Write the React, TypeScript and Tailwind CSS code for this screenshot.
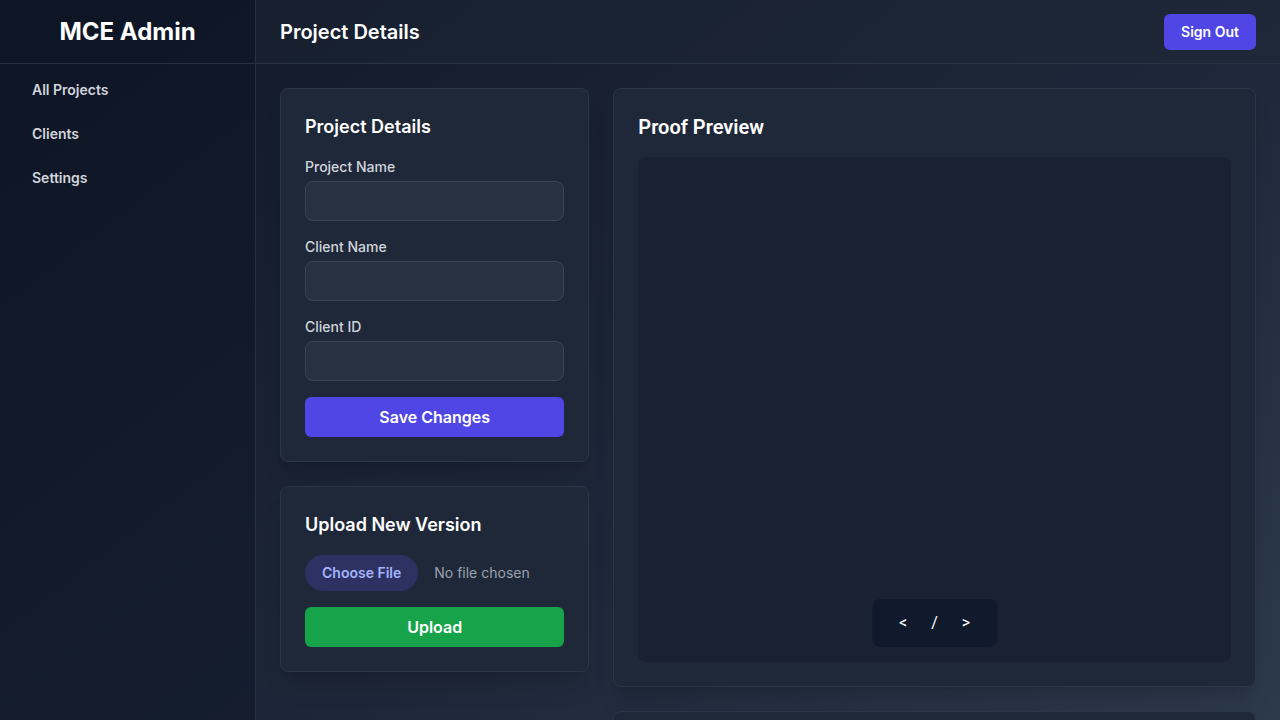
import { useState } from "react";

const navItems = ["All Projects", "Clients", "Settings"];

function Field({ label }: { label: string }) {
  return (
    <div>
      <label className="block text-sm font-medium text-gray-300">{label}</label>
      <input
        type="text"
        className="mt-1 block w-full h-10 rounded-lg border border-[#3a4457] bg-[#283142] px-3 text-sm text-white outline-none"
      />
    </div>
  );
}

export default function App() {
  const [page] = useState<{ current?: number; total?: number }>({});

  return (
    <div
      className="flex min-h-screen bg-gradient-to-br from-[#111827] via-[#1e2739] to-[#334155] text-white"
      style={{ fontFamily: "Inter, 'Noto Sans', sans-serif" }}
    >
      {/* Sidebar */}
      <aside className="w-64 shrink-0 border-r border-[#273043] bg-[#0b1222]/40">
        <div className="flex h-16 items-center justify-center border-b border-[#273043]">
          <h1 className="text-2xl font-bold">MCE Admin</h1>
        </div>
        <nav className="space-y-1 px-4 pt-1.5">
          {navItems.map((item) => (
            <a key={item} href="#" className="block rounded-lg px-4 py-2.5 text-sm font-semibold text-gray-300">
              {item}
            </a>
          ))}
        </nav>
      </aside>

      {/* Main */}
      <div className="flex-1 min-w-0">
        <header className="flex h-16 items-center justify-between border-b border-[#2a3447] bg-[#1f2737]/40 px-6">
          <h2 className="text-xl font-semibold">Project Details</h2>
          <button className="rounded-md bg-[#4f46e5] px-[17px] py-2 text-sm font-semibold">Sign Out</button>
        </header>

        <main className="grid grid-cols-3 gap-6 p-6">
          <div className="col-span-1 space-y-6">
            <section className="rounded-lg border border-[#2c3649] bg-[#1f2839] p-6 shadow-xl">
              <h3 className="mb-4 text-lg font-semibold">Project Details</h3>
              <div className="space-y-4">
                <Field label="Project Name" />
                <Field label="Client Name" />
                <Field label="Client ID" />
                <button className="h-10 w-full rounded-md bg-[#4f46e5] text-base font-semibold">Save Changes</button>
              </div>
            </section>

            <section className="rounded-lg border border-[#2c3649] bg-[#1f2839] p-6 shadow-xl">
              <h3 className="mb-4 text-lg font-semibold">Upload New Version</h3>
              <div className="space-y-4">
                <input
                  type="file"
                  className="block h-9 w-full text-sm text-gray-400 file:mr-4 file:h-9 file:rounded-full file:border-0 file:bg-[#2d3263] file:px-[17px] file:text-sm file:font-semibold file:text-[#a5b4fc]"
                />
                <button className="h-10 w-full rounded-md bg-[#16a34a] text-base font-semibold">Upload</button>
              </div>
            </section>
          </div>

          <div className="col-span-2 space-y-6">
            <section className="rounded-lg border border-[#2c3649] bg-[#1f2839] p-6 shadow-xl">
              <h3 className="mb-4 text-xl font-semibold leading-7" style={{ fontFamily: "Roboto, sans-serif" }}>
                Proof Preview
              </h3>
              <div className="relative h-[505px] rounded-lg bg-[#1a2130]">
                <div
                  className="absolute bottom-[15px] left-1/2 flex -translate-x-1/2 items-center gap-6 rounded-lg bg-[#111a2c] px-[27px] py-3 text-base"
                  style={{ fontFamily: "Roboto, sans-serif" }}
                >
                  <button>&lt;</button>
                  <span>
                    {page.current ?? ""} / {page.total ?? ""}
                  </span>
                  <button>&gt;</button>
                </div>
              </div>
            </section>

            <section className="h-64 rounded-lg border border-[#2c3649] bg-[#1f2839] p-6 shadow-xl" />
          </div>
        </main>
      </div>
    </div>
  );
}
